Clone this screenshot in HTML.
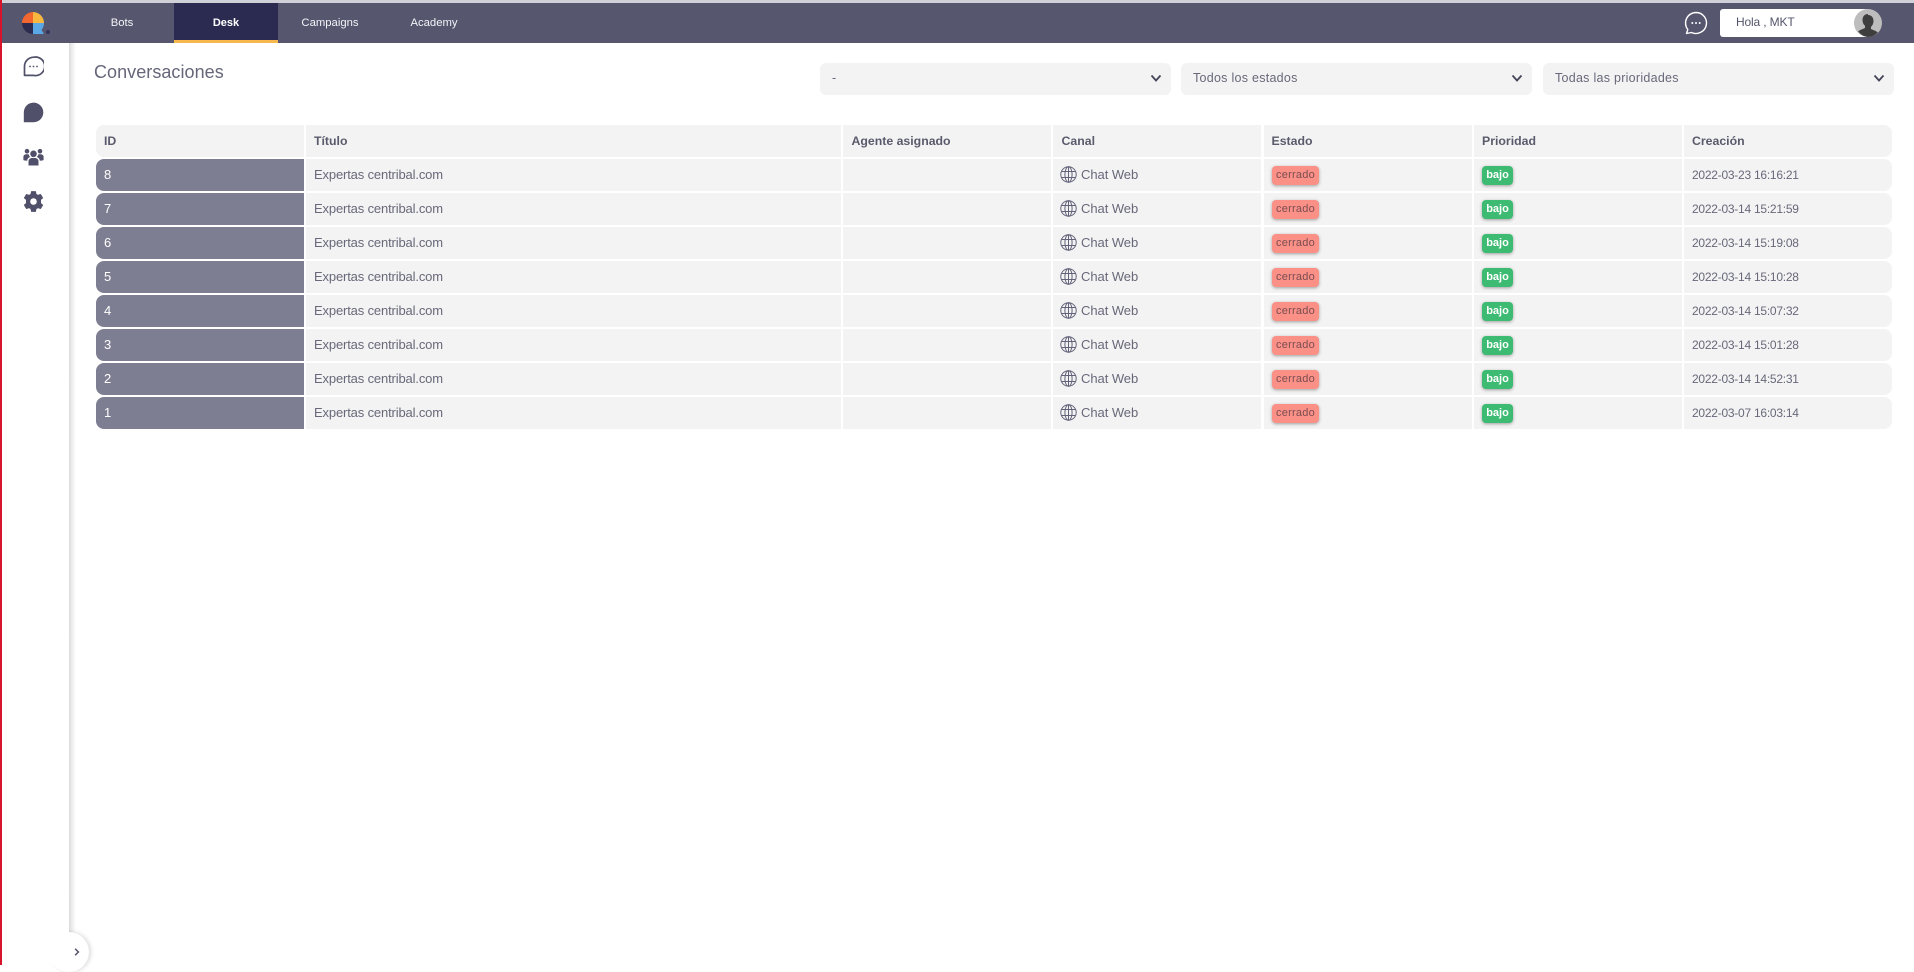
<!DOCTYPE html>
<html lang="es">
<head>
<meta charset="utf-8">
<title>Conversaciones</title>
<style>
*{box-sizing:border-box}
html,body{margin:0;padding:0;width:1914px;height:965px;overflow:hidden;background:#fff;font-family:"Liberation Sans",sans-serif;color:#5e5e70}
.a{position:absolute}
#top{left:0;top:0;width:1914px;height:3px;background:#d0d0d8}
#hdr{left:0;top:3px;width:1914px;height:40px;background:#56566f}
#red{left:0;top:0;width:2px;height:965px;background:#d8142c;z-index:9}
.tab{position:absolute;top:3px;height:40px;width:104px;text-align:center;color:#f4f4f8;font-size:11.3px;line-height:41px}
.tab.on{background:#2b2b52;border-bottom:3px solid #f8b84e;font-weight:bold;font-size:11px;color:#fff}
#side{left:69px;top:43px;width:7px;height:922px;background:linear-gradient(90deg,#dcdcdc,#f3f3f3 60%,#fff)}
#hola{left:1720px;top:9px;width:148px;height:28px;background:#fff;border-radius:3px 0 0 3px;font-size:12px;line-height:27px;padding-left:16px;letter-spacing:-.15px;color:#55556a}
#ttl{left:94px;top:60px;font-size:18px;line-height:24px;letter-spacing:.05px;color:#66667a}
.sel{position:absolute;top:63px;height:32px;background:#f3f3f3;border-radius:6px;font-size:12.5px;line-height:31px;padding-left:12px;letter-spacing:.27px;color:#68687a}
.sel svg{position:absolute;right:9px;top:11px}
.row{position:absolute;left:96px;width:1796px;height:32px}
.c{position:absolute;top:0;height:32px;background:#f3f3f3;padding-left:8px;font-size:13px;line-height:31px;letter-spacing:-.15px;color:#68687a;white-space:nowrap}
.c1{left:0;width:208px;border-radius:8px 0 0 8px}
.c2{left:210px;width:535px}
.c3{left:747px;width:208px}
.c4{left:957px;width:208px;padding-left:28px;letter-spacing:-.05px}
.c5{left:1167.5px;width:208.500px}
.c6{left:1378px;width:208px}
.c7{left:1588px;width:208px;border-radius:0 8px 8px 0;font-size:12px;line-height:33px;letter-spacing:-.25px}
.h .c{font-weight:bold;color:#5a5a6c;font-size:12.300px;line-height:33px;letter-spacing:0}
.h .c3{padding-left:8.500px}
.h .c4{padding-left:8.500px}
.r .c1{background:#7e7e92;color:#fff}
.c4 svg{position:absolute;left:7px;top:7px}
.bd{position:absolute;top:7px;height:19px;border-radius:4px;font-size:11px;line-height:19px;letter-spacing:.25px;text-align:center;box-shadow:0 1px 3px rgba(0,0,0,.35)}
.ce{left:8.500px;width:47px;background:#fb9086;color:#7a4d52}
.ba{left:8px;width:31px;background:#3dbb72;color:#fff;font-weight:bold;letter-spacing:0}
#tog{left:49px;top:932px;width:40px;height:40px;border-radius:50%;background:#fff;box-shadow:2px 0 4px rgba(0,0,0,.14)}
#mask{left:2px;top:43px;width:67px;height:922px;background:#fff}
</style>
</head>
<body>
<div class="a" id="top"></div>
<div class="a" id="hdr"></div>
<div class="a" id="side"></div>
<div class="a" id="tog"></div>
<div class="a" id="mask"></div>
<div class="a" id="red"></div>

<svg class="a" style="left:20px;top:10px" width="34" height="28" viewBox="0 0 34 28">
<path d="M13 13V2A11 11 0 0 0 2 13Z" fill="#f2662f"/>
<path d="M13 13V2A11 11 0 0 1 24 13Z" fill="#f8b83f"/>
<path d="M13 13H2A11 11 0 0 0 13 24Z" fill="#2c2c50"/>
<path d="M13 13H24A11 11 0 0 1 21.500 20L24 24H13Z" fill="#5aa9e6"/>
<circle cx="28" cy="22" r="2" fill="#34345a"/>
</svg>

<div class="tab" style="left:70px">Bots</div>
<div class="tab on" style="left:174px">Desk</div>
<div class="tab" style="left:278px">Campaigns</div>
<div class="tab" style="left:382px">Academy</div>

<svg class="a" style="left:1683px;top:10px" width="26" height="26" viewBox="0 0 26 26">
<path d="M13 2.500A10.500 10.500 0 1 1 8.500 22.500L3.500 23.500 4.800 19.500A10.500 10.500 0 0 1 13 2.500Z" fill="none" stroke="#fff" stroke-width="1.400" stroke-linejoin="round"/>
<circle cx="9.300" cy="13" r="1" fill="#fff"/><circle cx="13" cy="13" r="1" fill="#fff"/><circle cx="16.700" cy="13" r="1" fill="#fff"/>
</svg>

<div class="a" id="hola">Hola , MKT</div>
<svg class="a" style="left:1854px;top:9px" width="28" height="28" viewBox="0 0 28 28">
<circle cx="14" cy="14" r="14" fill="#bdbdbd"/>
<path d="M14 5c-3.600 0-5.500 2.700-5.500 6 0 2.500 1 4.600 2.500 5.800v2.200c-2 1-5 1.700-6.800 3.500A14 14 0 0 0 14 28a14 14 0 0 0 9.800-4.500c-1.800-1.800-4.800-2.500-6.800-3.500v-2.200c1.500-1.200 2.500-3.300 2.500-5.800 0-3.300-1.900-6-5.500-6Z" fill="#3e3e3e"/>
</svg>

<svg class="a" style="left:23px;top:56px" width="21" height="21" viewBox="0 0 21 21">
<path d="M10.500 1.200A9.300 9.300 0 1 1 10.500 19.400H1.500V10.500A9.300 9.300 0 0 1 10.500 1.200Z" fill="none" stroke="#50506a" stroke-width="1.700" stroke-linejoin="round"/>
<circle cx="7" cy="10.500" r=".9" fill="#50506a"/><circle cx="10.500" cy="10.500" r=".9" fill="#50506a"/><circle cx="14" cy="10.500" r=".9" fill="#50506a"/>
</svg>
<svg class="a" style="left:23px;top:102px" width="21" height="21" viewBox="0 0 21 21">
<path d="M10.500 .6A9.800 9.800 0 1 1 10.500 20.200H.8V10.500A9.800 9.800 0 0 1 10.500 .6Z" fill="#50506a"/>
</svg>
<svg class="a" style="left:23px;top:148px" width="21" height="18" viewBox="0 0 21 18">
<g fill="#50506a">
<circle cx="10.500" cy="5.800" r="3.300"/>
<circle cx="4" cy="3.200" r="2.300"/>
<circle cx="17" cy="3.200" r="2.300"/>
<path d="M5.500 17.500V13.500C5.500 11 7.500 10 9 10H12C13.500 10 15.500 11 15.500 13.500V17.500Z"/>
<path d="M.4 12V9C.4 7 2 6.300 3.500 6.300H5.700C5.900 7.500 6.500 8.400 7.300 9 5.500 9.500 4.300 10.800 4.200 12.700 2.500 12.700 1 12.500 .4 12Z"/>
<path d="M20.600 12V9C20.600 7 19 6.300 17.500 6.300H15.300C15.100 7.500 14.500 8.400 13.700 9 15.500 9.500 16.700 10.800 16.800 12.700 18.500 12.700 20 12.500 20.600 12Z"/>
</g>
</svg>
<svg class="a" style="left:23px;top:191px" width="21" height="21" viewBox="0 0 21 21">
<path fill="#50506a" fill-rule="evenodd" d="M8.500.5H12.500L13.100 3.200 15 4.300 17.600 3.400 19.700 6.900 17.600 8.700V12.300L19.700 14.100 17.600 17.600 15 16.700 13.100 17.800 12.500 20.500H8.500L7.900 17.800 6 16.700 3.400 17.600 1.300 14.100 3.400 12.300V8.700L1.300 6.900 3.400 3.400 6 4.300 7.900 3.200ZM10.500 6.800A3.700 3.700 0 1 0 10.500 14.200 3.700 3.700 0 0 0 10.500 6.800Z" stroke="#50506a" stroke-width=".8" stroke-linejoin="round"/>
</svg>

<svg class="a" style="left:74px;top:948px" width="6" height="8" viewBox="0 0 6 8">
<path d="M1.200 .8 4.400 4 1.200 7.200" fill="none" stroke="#56566a" stroke-width="1.500"/>
</svg>

<div class="a" id="ttl">Conversaciones</div>

<div class="sel" style="left:820px;width:351px">-<svg width="12" height="9" viewBox="0 0 12 9"><path d="M1.500 1.500 6 6.500 10.500 1.500" fill="none" stroke="#45455a" stroke-width="1.800"/></svg></div>
<div class="sel" style="left:1181px;width:351px">Todos los estados<svg width="12" height="9" viewBox="0 0 12 9"><path d="M1.500 1.500 6 6.500 10.500 1.500" fill="none" stroke="#45455a" stroke-width="1.800"/></svg></div>
<div class="sel" style="left:1543px;width:351px">Todas las prioridades<svg width="12" height="9" viewBox="0 0 12 9"><path d="M1.500 1.500 6 6.500 10.500 1.500" fill="none" stroke="#45455a" stroke-width="1.800"/></svg></div>

<svg width="0" height="0" style="position:absolute"><defs><g id="gl" fill="none" stroke="#62627a" stroke-width="1"><circle cx="8.500" cy="8.500" r="7.700"/><ellipse cx="8.500" cy="8.500" rx="3.600" ry="7.700"/><path d="M8.500 .8V16.200M1.700 5.500H15.300M1.700 11.500H15.300"/></g></defs></svg>

<div class="row h" style="top:125px">
<div class="c c1">ID</div><div class="c c2">Título</div><div class="c c3">Agente asignado</div><div class="c c4">Canal</div><div class="c c5">Estado</div><div class="c c6">Prioridad</div><div class="c c7">Creación</div>
</div>

<div class="row r" style="top:159px"><div class="c c1">8</div><div class="c c2">Expertas centribal.com</div><div class="c c3"></div><div class="c c4"><svg width="17" height="17"><use href="#gl"/></svg>Chat Web</div><div class="c c5"><span class="bd ce">cerrado</span></div><div class="c c6"><span class="bd ba">bajo</span></div><div class="c c7">2022-03-23 16:16:21</div></div>
<div class="row r" style="top:193px"><div class="c c1">7</div><div class="c c2">Expertas centribal.com</div><div class="c c3"></div><div class="c c4"><svg width="17" height="17"><use href="#gl"/></svg>Chat Web</div><div class="c c5"><span class="bd ce">cerrado</span></div><div class="c c6"><span class="bd ba">bajo</span></div><div class="c c7">2022-03-14 15:21:59</div></div>
<div class="row r" style="top:227px"><div class="c c1">6</div><div class="c c2">Expertas centribal.com</div><div class="c c3"></div><div class="c c4"><svg width="17" height="17"><use href="#gl"/></svg>Chat Web</div><div class="c c5"><span class="bd ce">cerrado</span></div><div class="c c6"><span class="bd ba">bajo</span></div><div class="c c7">2022-03-14 15:19:08</div></div>
<div class="row r" style="top:261px"><div class="c c1">5</div><div class="c c2">Expertas centribal.com</div><div class="c c3"></div><div class="c c4"><svg width="17" height="17"><use href="#gl"/></svg>Chat Web</div><div class="c c5"><span class="bd ce">cerrado</span></div><div class="c c6"><span class="bd ba">bajo</span></div><div class="c c7">2022-03-14 15:10:28</div></div>
<div class="row r" style="top:295px"><div class="c c1">4</div><div class="c c2">Expertas centribal.com</div><div class="c c3"></div><div class="c c4"><svg width="17" height="17"><use href="#gl"/></svg>Chat Web</div><div class="c c5"><span class="bd ce">cerrado</span></div><div class="c c6"><span class="bd ba">bajo</span></div><div class="c c7">2022-03-14 15:07:32</div></div>
<div class="row r" style="top:329px"><div class="c c1">3</div><div class="c c2">Expertas centribal.com</div><div class="c c3"></div><div class="c c4"><svg width="17" height="17"><use href="#gl"/></svg>Chat Web</div><div class="c c5"><span class="bd ce">cerrado</span></div><div class="c c6"><span class="bd ba">bajo</span></div><div class="c c7">2022-03-14 15:01:28</div></div>
<div class="row r" style="top:363px"><div class="c c1">2</div><div class="c c2">Expertas centribal.com</div><div class="c c3"></div><div class="c c4"><svg width="17" height="17"><use href="#gl"/></svg>Chat Web</div><div class="c c5"><span class="bd ce">cerrado</span></div><div class="c c6"><span class="bd ba">bajo</span></div><div class="c c7">2022-03-14 14:52:31</div></div>
<div class="row r" style="top:397px"><div class="c c1">1</div><div class="c c2">Expertas centribal.com</div><div class="c c3"></div><div class="c c4"><svg width="17" height="17"><use href="#gl"/></svg>Chat Web</div><div class="c c5"><span class="bd ce">cerrado</span></div><div class="c c6"><span class="bd ba">bajo</span></div><div class="c c7">2022-03-07 16:03:14</div></div>
</body>
</html>
